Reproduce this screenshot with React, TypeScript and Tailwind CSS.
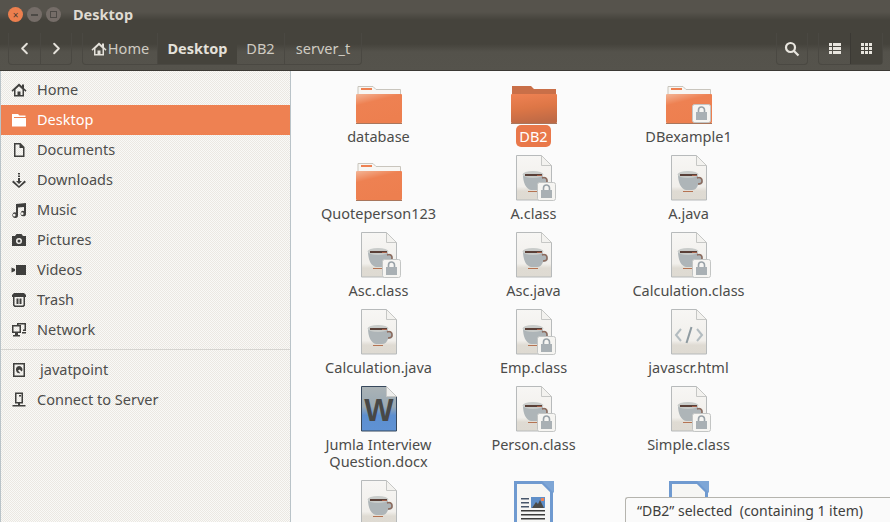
import React from 'react';
import { ChevronLeft, ChevronRight } from 'lucide-react';

type Glyph = 'home' | 'desktop' | 'doc' | 'download' | 'music' | 'camera' | 'video' | 'trash' | 'network' | 'disk' | 'server';

const SideIcon = ({ name, color = '#3f3f3d' }: { name: Glyph; color?: string }) => (
  <svg width="16" height="16" viewBox="0 0 16 16" fill={color} stroke="none">
    {name === 'home' && (
      <path fillRule="evenodd" d="M8 1.500 0.500 8.500l1 1.200L3 8.300V14.500h10V8.300l1.500 1.400 1-1.200L13 6.200V2.500h-2v1.800ZM8 4.200 11.500 7.400V13H9.500V9.500h-3V13H4.500V7.400Z" />
    )}
    {name === 'desktop' && <path d="M1 2h6l1.500 1.500H14.500V5H3v1h12v8.500H1Z" />}
    {name === 'doc' && <path fillRule="evenodd" d="M3 1h6.500L13.500 5v10H3ZM4.500 2.500v11h7.500V6H8.500V2.500Z" />}
    {name === 'download' && (
      <>
        <path d="M7 1h2v1.500H7ZM7 3.500h2V5H7ZM7 6h2v3h2l-3 3-3-3h2Z" />
        <path d="M2.500 8.500 8 14 13.500 8.500 15 10 8 16 1 10Z" />
      </>
    )}
    {name === 'music' && (
      <path fillRule="evenodd" d="M5 2 15 1v10.500a2.700 2.700 0 1 1-2-2.500V5L7 5.600V13a2.800 2.800 0 1 1-2-2.600ZM3.200 11.800a1.300 1.300 0 1 0 .1 2.600 1.300 1.300 0 0 0-.1-2.600ZM11.200 10.300a1.300 1.300 0 1 0 .1 2.600 1.300 1.300 0 0 0-.1-2.600Z" />
    )}
    {name === 'camera' && (
      <path fillRule="evenodd" d="M1 4h3l1.500-2h5L12 4h3v10H1ZM8 6a3 3 0 1 0 0 6 3 3 0 0 0 0-6ZM8 7.500a1.500 1.500 0 1 1 0 3 1.500 1.500 0 0 1 0-3Z" />
    )}
    {name === 'video' && <path d="M5 3h10v10H5ZM0.500 5.500 4 7v2L0.500 10.500Z" />}
    {name === 'trash' && (
      <path fillRule="evenodd" d="M3 1h10l2 2v2h-1v8.500L12.500 15h-9L2 13.500V5H1V3ZM3.500 5v8l1 .5h7l1-.5V5ZM5.500 6.500H7v5.500H5.500ZM9 6.500h1.500v5.500H9ZM7.500 6.500h1v5.500h-1Z" />
    )}
    {name === 'network' && (
      <path fillRule="evenodd" d="M1 3h9v8H7v2h2v1.500H2V13h2v-2H1ZM2.500 4.500v5h6v-5ZM6 1h9v8h-3V7.500h1.500v-5h-6V3H6ZM11 10h4v1.500h-4Z" />
    )}
    {name === 'disk' && (
      <path fillRule="evenodd" d="M2 1h12v14H2ZM3.500 2.500v11h9v-11ZM8 4a3.500 3.500 0 0 1 2.800 5.600L8.500 7.500 7 8.500 9.300 11.200A3.500 3.500 0 1 1 8 4Z" />
    )}
    {name === 'server' && (
      <path fillRule="evenodd" d="M4 0.500h8v11H9v1.500h5.500v1.500h-13V13H7v-1.500H4ZM5.500 2v8h5V2ZM8 3h2v1.500H8Z" />
    )}
  </svg>
);

const places: { icon: Glyph; label: string; active?: boolean }[] = [
  { icon: 'home', label: 'Home' },
  { icon: 'desktop', label: 'Desktop', active: true },
  { icon: 'doc', label: 'Documents' },
  { icon: 'download', label: 'Downloads' },
  { icon: 'music', label: 'Music' },
  { icon: 'camera', label: 'Pictures' },
  { icon: 'video', label: 'Videos' },
  { icon: 'trash', label: 'Trash' },
  { icon: 'network', label: 'Network' },
];

const SideRow = ({ icon, label, active, indent }: { icon: Glyph; label: string; active?: boolean; indent?: boolean }) => (
  <div className={`flex h-[30px] items-center pl-[10px] ${active ? 'bg-[#ee8152] text-white' : 'text-[#4e4e4c]'}`}>
    <SideIcon name={icon} color={active ? '#ffffff' : '#3f3f3d'} />
    <span className={indent ? 'ml-[13px]' : 'ml-[10px]'}>{label}</span>
  </div>
);

const LockBadge = ({ x, y }: { x: number; y: number }) => (
  <g transform={`translate(${x} ${y})`}>
    <rect x="0.500" y="0.500" width="18" height="18" rx="2" fill="#f6f5f2" stroke="#c3c5c4" />
    <rect x="4" y="8" width="11" height="8" fill="#a9b0b4" />
    <path d="M6.500 8V6a3 3 0 0 1 6 0v2" fill="none" stroke="#99a2a8" strokeWidth="1.600" />
  </g>
);

const FolderIcon = ({ locked, selected }: { locked?: boolean; selected?: boolean }) => (
  <svg width="48" height="48" viewBox="0 0 48 48">
    <defs>
      <linearGradient id="folderFront" x1="0" y1="0" x2="0.400" y2="1">
        <stop offset="0" stopColor="#f3b596" />
        <stop offset="0.350" stopColor="#ee8152" />
        <stop offset="1" stopColor="#ed7f4f" />
      </linearGradient>
      <linearGradient id="folderSel" x1="0.200" y1="0" x2="0.400" y2="1">
        <stop offset="0" stopColor="#ee8152" />
        <stop offset="0.500" stopColor="#dd7646" />
        <stop offset="1" stopColor="#bf6a46" />
      </linearGradient>
    </defs>
    {selected ? (
      <path d="M2 9h19l3 3h22v8H2Z" fill="#c96f48" />
    ) : (
      <>
        <path d="M3 9.500h15l3 3h24.500V18H3Z" fill="#f7f6f3" stroke="#c9c5bd" />
        <rect x="6" y="11" width="11" height="2" fill="#ee8152" />
      </>
    )}
    <rect x="1" y="17" width="46" height="29" rx="1" fill={selected ? 'url(#folderSel)' : 'url(#folderFront)'} />
    <rect x="1" y="46" width="46" height="1" fill="#a9765c" />
    {locked && <LockBadge x={27} y={27} />}
  </svg>
);

const PageShape = () => (
  <>
    <defs>
      <linearGradient id="pageFill" x1="0" y1="0" x2="0" y2="1">
        <stop offset="0" stopColor="#f7f6f4" />
        <stop offset="0.700" stopColor="#f1efeb" />
        <stop offset="0.800" stopColor="#dfdbd3" />
        <stop offset="1" stopColor="#dedad2" />
      </linearGradient>
    </defs>
    <path d="M6.500 1.500h25l10 10v34.500h-35Z" fill="url(#pageFill)" stroke="#b7babb" />
    <path d="M31.500 1.500v10h10Z" fill="#f3f2ef" stroke="#c6c7c5" />
  </>
);

const JavaIcon = ({ locked }: { locked?: boolean }) => (
  <svg width="48" height="48" viewBox="0 0 48 48">
    <PageShape />
    <path d="M13 20c0 9 3 15 8 16h6c3 0 5-2 6-5 3 0 5-1 5-4s-2-4-5-4v-3Z" fill="#aeb5b8" />
    <path d="M32 24c3-1 5 0 5 3s-2 3-4 3" fill="none" stroke="#8d6a5c" strokeWidth="1.500" />
    <ellipse cx="23" cy="20.500" rx="10.500" ry="3.500" fill="#c9ccca" />
    <path d="M15 20h17v2H15Z" fill="#5a4038" />
    <path d="M27 21h5v1h-5Z" fill="#a4604a" />
    <path d="M18 37h10v1H18Z" fill="#b57352" />
    {locked && <LockBadge x={27} y={28} />}
  </svg>
);

const HtmlIcon = () => (
  <svg width="48" height="48" viewBox="0 0 48 48">
    <PageShape />
    <path d="M16 21 11 27l5 6M32 21l5 6-5 6" fill="none" stroke="#b3bcc0" strokeWidth="2" />
    <path d="M26.500 19 21.500 35" fill="none" stroke="#8f9ba1" strokeWidth="2" />
  </svg>
);

const WordIcon = () => (
  <svg width="48" height="48" viewBox="0 0 48 48">
    <defs>
      <linearGradient id="wordFill" x1="0" y1="0" x2="0" y2="1">
        <stop offset="0" stopColor="#abb3b6" />
        <stop offset="0.450" stopColor="#9aa9b3" />
        <stop offset="0.650" stopColor="#5d8fd0" />
        <stop offset="1" stopColor="#5f92d4" />
      </linearGradient>
    </defs>
    <path d="M6.500 1.500h25l10 10v34.500h-35Z" fill="url(#wordFill)" stroke="#37485c" />
    <path d="M31.500 1.500v10h10Z" fill="#eeeeec" stroke="#c6c7c5" />
    <text x="24" y="36" textAnchor="middle" fontFamily="'Liberation Sans', sans-serif" fontWeight="700" fontSize="31" fill="#484846">
      W
    </text>
  </svg>
);

const WriterIcon = () => (
  <svg width="48" height="48" viewBox="0 0 48 48">
    <path d="M5.500 3.500h27l9 9v34h-36Z" fill="#f6f6f4" stroke="#6f9ad0" strokeWidth="3" />
    <path d="M32 2h12v12Z" fill="#7ea6d6" />
    <path d="M11 19h8v1.500h-8ZM11 23h8v1.500h-8ZM11 27h8v1.500h-8Z" fill="#48566a" />
    <rect x="21" y="18" width="14" height="11" fill="#5f8fc8" />
    <path d="M22 29l4-6 2 2 2-4 4 8Z" fill="#4b4b48" />
    <rect x="31" y="19" width="3" height="3" fill="#ee8152" />
    <path d="M11 31h24v1.600H11ZM11 35h24v1.600H11ZM11 39h24v1.600H11Z" fill="#3d3d3b" />
  </svg>
);

type FileItem = { name?: string; lines?: string[]; icon: React.ReactNode; selected?: boolean };

const files: FileItem[] = [
  { name: 'database', icon: <FolderIcon /> },
  { name: 'DB2', icon: <FolderIcon selected />, selected: true },
  { name: 'DBexample1', icon: <FolderIcon locked /> },
  { name: 'Quoteperson123', icon: <FolderIcon /> },
  { name: 'A.class', icon: <JavaIcon locked /> },
  { name: 'A.java', icon: <JavaIcon /> },
  { name: 'Asc.class', icon: <JavaIcon locked /> },
  { name: 'Asc.java', icon: <JavaIcon /> },
  { name: 'Calculation.class', icon: <JavaIcon locked /> },
  { name: 'Calculation.java', icon: <JavaIcon /> },
  { name: 'Emp.class', icon: <JavaIcon locked /> },
  { name: 'javascr.html', icon: <HtmlIcon /> },
  { lines: ['Jumla Interview', 'Question.docx'], icon: <WordIcon /> },
  { name: 'Person.class', icon: <JavaIcon locked /> },
  { name: 'Simple.class', icon: <JavaIcon locked /> },
  // last row is cut off by the window, labels not visible
  { icon: <JavaIcon /> },
  { icon: <WriterIcon /> },
  { icon: <WriterIcon /> },
];

const FileCell = ({ item }: { item: FileItem }) => (
  <div className="flex flex-col items-center pb-[9px]">
    {item.icon}
    <div className="mt-[3px] text-center leading-[17px] text-[#4c4c4a]">
      {item.lines ? (
        item.lines.map(l => <div key={l}>{l}</div>)
      ) : item.name ? (
        <span className={item.selected ? 'rounded-[5px] bg-[#e9784a] px-[3px] py-[1px] text-white' : ''}>{item.name}</span>
      ) : null}
    </div>
  </div>
);

export default function App() {
  return (
    <div className="relative flex h-[522px] w-[890px] flex-col overflow-hidden bg-[#fbfbfb] font-['Noto_Sans',sans-serif] text-[14.5px]">
      {/* header */}
      <div className="h-[71px] shrink-0 border-b border-[#3b3934] bg-[linear-gradient(#56534c_0px,#56534c_12px,#45433c_20px,#45433c_44px,#54524b_52px,#55534c_70px)]">
        <div className="flex h-[29px] items-center pl-[8px]">
          <div className="flex h-[15px] w-[15px] items-center justify-center rounded-full bg-[#ec7f4e] text-[10px] leading-none text-[#4a3a30]">×</div>
          <div className="ml-[4px] flex h-[15px] w-[15px] items-center justify-center rounded-full bg-[#756d68]">
            <div className="h-[2px] w-[7px] bg-[#4d4a46]" />
          </div>
          <div className="ml-[4px] flex h-[15px] w-[15px] items-center justify-center rounded-full bg-[#756d68]">
            <div className="h-[7px] w-[7px] border border-[#4d4a46]" />
          </div>
          <span className="ml-[12px] font-bold text-[#dfdbd2]">Desktop</span>
        </div>
        <div className="flex h-[36px] items-stretch pl-[8px] pr-[7px] pt-[4px] text-[#cfcbc2]">
          <div className="flex w-[64px] rounded-b-[4px] border border-t-0 border-[#4a4842]">
            <div className="flex w-[32px] items-center justify-center border-r border-[#4a4842]">
              <ChevronLeft size={19} strokeWidth={2.4} color="#e4e1da" />
            </div>
            <div className="flex flex-1 items-center justify-center">
              <ChevronRight size={19} strokeWidth={2.4} color="#e4e1da" />
            </div>
          </div>
          <div className="ml-[10px] flex w-[280px] rounded-b-[4px] border border-t-0 border-[#4a4842]">
            <div className="flex w-[75px] items-center justify-center gap-[1px] border-r border-[#4a4842]">
              <SideIcon name="home" color="#e4e1da" />
              <span>Home</span>
            </div>
            <div className="flex w-[79px] items-center justify-center bg-[#45433c] font-bold text-[#e4e1da]">Desktop</div>
            <div className="flex w-[48px] items-center justify-center border-r border-[#4a4842]">DB2</div>
            <div className="flex flex-1 items-center justify-center">server_t</div>
          </div>
          <div className="ml-auto flex w-[32px] items-center justify-center rounded-b-[4px] border border-t-0 border-[#4a4842]">
            <svg width="16" height="16" viewBox="0 0 16 16" fill="none" stroke="#e8e5de" strokeWidth="2.200">
              <circle cx="6.500" cy="6.500" r="4.500" />
              <path d="M10 10l4.500 4.500" />
            </svg>
          </div>
          <div className="ml-[10px] flex w-[65px] rounded-b-[4px] border border-t-0 border-[#4a4842]">
            <div className="flex w-[32px] items-center justify-center border-r border-[#3b3934]">
              <svg width="12" height="11" viewBox="0 0 12 11" fill="#e8e5de">
                <path d="M0 0h3v3H0ZM4 0h8v3H4ZM0 4h3v3H0ZM4 4h8v3H4ZM0 8h3v3H0ZM4 8h8v3H4Z" />
              </svg>
            </div>
            <div className="flex flex-1 items-center justify-center bg-[#45433c]">
              <svg width="11" height="11" viewBox="0 0 11 11" fill="#e8e5de">
                <path d="M0 0h3v3H0ZM4 0h3v3H4ZM8 0h3v3H8ZM0 4h3v3H0ZM4 4h3v3H4ZM8 4h3v3H8ZM0 8h3v3H0ZM4 8h3v3H4ZM8 8h3v3H8Z" />
              </svg>
            </div>
          </div>
        </div>
      </div>

      <div className="flex min-h-0 flex-1">
        {/* sidebar, dithered like the 256 colour capture */}
        <div className="w-[291px] shrink-0 border-l border-r border-l-[#b9c3c8] border-r-[#b9c3c8] bg-[conic-gradient(#f9f9f7_25%,#ebe8e2_0_50%,#f9f9f7_0_75%,#ebe8e2_0)] bg-[length:2px_2px] pt-[4px]">
          {places.map(p => (
            <SideRow key={p.label} icon={p.icon} label={p.label} active={p.active} />
          ))}
          <div className="mt-[4px] mb-[5px] h-px bg-[#d5d4d0]" />
          <SideRow icon="disk" label="javatpoint" indent />
          <SideRow icon="server" label="Connect to Server" />
        </div>

        {/* files */}
        <div className="grid flex-1 grid-cols-[155px_155px_155px] content-start overflow-hidden pl-[10px] pt-[6px]">
          {files.map((f, idx) => (
            <FileCell key={idx} item={f} />
          ))}
        </div>
      </div>

      {/* floating status */}
      <div className="absolute bottom-0 right-0 flex h-[25px] w-[265px] items-center rounded-tl-[3px] border-l border-t border-[#b5b4ae] bg-[#fafafa] pl-[11px] text-[14px] text-[#3f3f3d]">
        “DB2” selected&nbsp; (containing 1 item)
      </div>
    </div>
  );
}
